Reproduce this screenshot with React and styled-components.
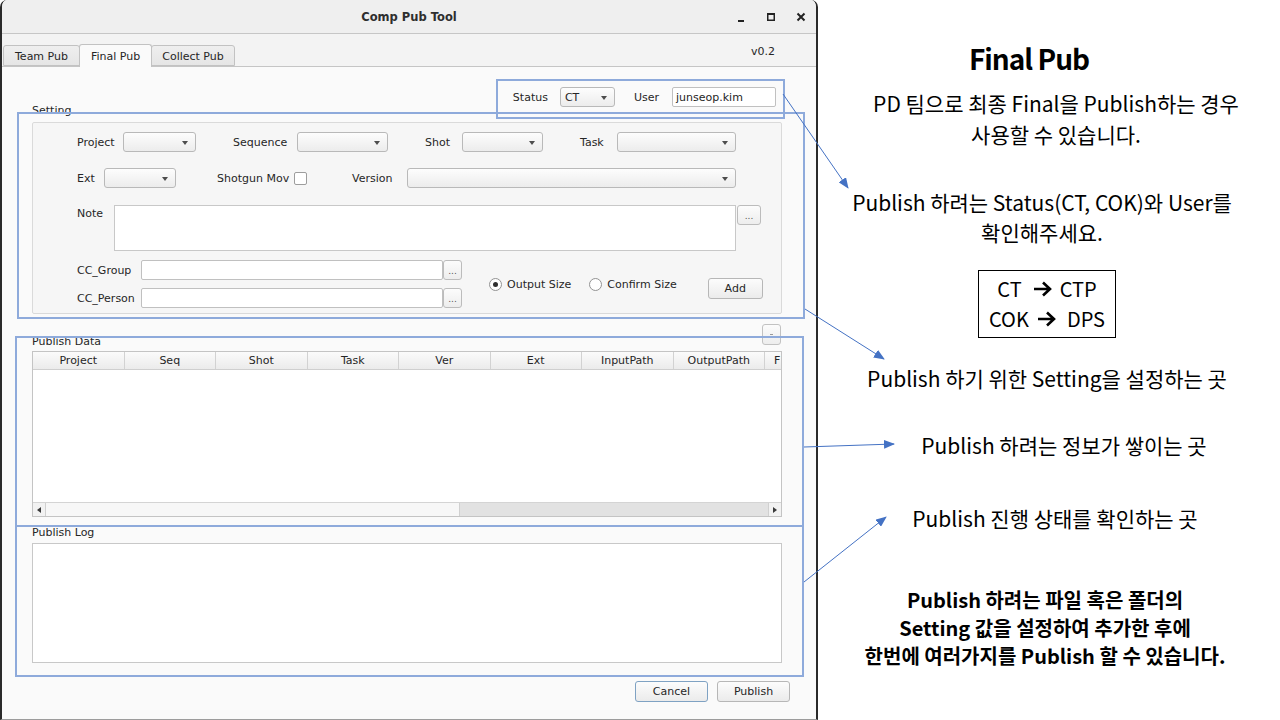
import React from "react";
import styled, { createGlobalStyle } from "styled-components";

const Global = createGlobalStyle`
  html, body { margin: 0; padding: 0; background: #fff; overflow: hidden; }
  #root { width: 1280px; height: 720px; }
  * { box-sizing: border-box; }
`;

const Page = styled.div`
  position: relative;
  width: 1280px;
  height: 720px;
  display: flex;
  background: #fff;
`;

/* ---------- Window ---------- */
const Window = styled.div`
  width: 818px;
  height: 720px;
  flex: none;
  display: flex;
  flex-direction: column;
  border-left: 2px solid #2a2a2a;
  border-right: 2px solid #2a2a2a;
  border-bottom: 1px solid #9c9c9c;
  border-radius: 7px 7px 0 0;
  background: #f3f3f3;
  overflow: hidden;
  font-family: "DejaVu Sans", "Noto Sans", sans-serif;
  font-size: 11px;
  color: #262626;
`;

const TitleBar = styled.div`
  height: 34px;
  flex: none;
  display: grid;
  grid-template-columns: 1fr auto 1fr;
  align-items: center;
  background: #efefef;
  border-bottom: 1px solid #c6c6c6;
`;

const TitleText = styled.div`
  grid-column: 2;
  font-weight: bold;
  font-size: 11.5px;
  color: #2e2e2e;
`;

const WinControls = styled.div`
  grid-column: 3;
  justify-self: end;
  display: flex;
  gap: 16px;
  padding-right: 8px;
`;

const WinButton = styled.span`
  width: 14px;
  height: 14px;
  display: flex;
  align-items: center;
  justify-content: center;
`;

const TabBar = styled.div`
  height: 32px;
  flex: none;
  display: flex;
  align-items: flex-end;
  padding-left: 1px;
  background: #f3f3f3;
  position: relative;
  z-index: 1;
`;

const Tab = styled.div`
  width: ${(p) => p.$w}px;
  height: ${(p) => (p.$active ? 23 : 21)}px;
  margin-left: ${(p) => (p.$first ? 0 : -1)}px;
  margin-bottom: ${(p) => (p.$active ? -1 : 0)}px;
  display: flex;
  align-items: center;
  justify-content: center;
  border: 1px solid #c2c2c2;
  border-bottom: ${(p) => (p.$active ? "none" : "1px solid #c2c2c2")};
  border-radius: 3px 3px 0 0;
  background: ${(p) => (p.$active ? "#fafafa" : "linear-gradient(#efefef, #e5e5e5)")};
  position: relative;
  z-index: ${(p) => (p.$active ? 2 : 1)};
  padding-top: ${(p) => (p.$active ? 0 : 1)}px;
`;

const VersionTag = styled.div`
  margin-left: auto;
  align-self: flex-end;
  margin-bottom: 8px;
  padding-right: 41px;
`;

const TabPane = styled.div`
  flex: 1;
  display: flex;
  flex-direction: column;
  background: #fafafa;
  border-top: 1px solid #c5c5c5;
  padding: 0 34px 0 30px;
`;

/* ---------- Generic widgets ---------- */
const StatusRow = styled.div`
  margin-top: 20px;
  height: 20px;
  display: flex;
  align-items: center;
  justify-content: flex-end;
  padding-right: 6px;
`;

const FieldLabel = styled.span`
  flex: none;
  white-space: nowrap;
  width: ${(p) => (p.$w ? `${p.$w}px` : "auto")};
  margin-left: ${(p) => p.$ml || 0}px;
  align-self: ${(p) => (p.$top ? "flex-start" : "auto")};
  margin-top: ${(p) => (p.$top ? 2 : 0)}px;
`;

const Combo = styled.div`
  width: ${(p) => p.$w}px;
  height: 20px;
  flex: none;
  margin-left: ${(p) => p.$ml || 0}px;
  border: 1px solid #b9b9b9;
  border-radius: 3px;
  background: linear-gradient(#fdfdfd, #ececec);
  position: relative;
  display: flex;
  align-items: center;
  padding-left: 4px;
  &::after {
    content: "";
    position: absolute;
    right: 7px;
    top: 8px;
    border-left: 3.5px solid transparent;
    border-right: 3.5px solid transparent;
    border-top: 4px solid #4d4d4d;
  }
`;

const LineEdit = styled.div`
  width: ${(p) => p.$w}px;
  height: 20px;
  flex: none;
  margin-left: ${(p) => p.$ml || 0}px;
  border: 1px solid #c0c0c0;
  border-radius: 2px;
  background: #fff;
  display: flex;
  align-items: center;
  padding-left: 3px;
  color: #1e1e1e;
`;

const TextBox = styled.div`
  width: ${(p) => p.$w}px;
  height: ${(p) => p.$h}px;
  flex: none;
  margin-top: ${(p) => p.$mt || 0}px;
  border: 1px solid #c8c8c8;
  background: #fff;
`;

const DotsButton = styled.div`
  width: ${(p) => p.$w}px;
  height: 20px;
  flex: none;
  margin-left: ${(p) => p.$ml || 0}px;
  align-self: flex-start;
  border: 1px solid #bcbcbc;
  border-radius: 3px;
  background: linear-gradient(#fcfcfc, #ededed);
  display: flex;
  align-items: flex-end;
  justify-content: center;
  padding-bottom: 3px;
  font-size: 9px;
  line-height: 9px;
  color: #555;
`;

const CheckBox = styled.span`
  width: 13px;
  height: 13px;
  flex: none;
  border: 1px solid #9d9d9d;
  border-radius: 2px;
  background: #fff;
`;

const RadioItem = styled.span`
  display: flex;
  align-items: center;
  gap: 5px;
  margin-left: ${(p) => p.$ml || 0}px;
  white-space: nowrap;
`;

const RadioCircle = styled.span`
  width: 13px;
  height: 13px;
  flex: none;
  border-radius: 50%;
  border: 1px solid #939393;
  background: #fff;
  display: flex;
  align-items: center;
  justify-content: center;
  &::after {
    content: "";
    width: 5px;
    height: 5px;
    border-radius: 50%;
    background: ${(p) => (p.$checked ? "#2f2f2f" : "transparent")};
  }
`;

const PushButton = styled.div`
  width: ${(p) => p.$w}px;
  height: 21px;
  flex: none;
  margin-left: ${(p) => p.$ml || 0}px;
  margin-top: ${(p) => p.$mt || 0}px;
  border: 1px solid ${(p) => (p.$focus ? "#7fa2c3" : "#b7b7b7")};
  border-radius: 3px;
  background: linear-gradient(#fcfcfc, #ebebeb);
  display: flex;
  align-items: center;
  justify-content: center;
  color: #262626;
`;

/* ---------- Setting group ---------- */
const GroupTitle = styled.div`
  line-height: 14px;
  height: 14px;
  margin-top: ${(p) => p.$mt || 0}px;
`;

const SettingFrame = styled.div`
  margin-top: 4px;
  border: 1px solid #dadada;
  border-radius: 2px;
  background: #f6f6f6;
  padding: 9px 0 5px 44px;
  display: flex;
  flex-direction: column;
`;

const FormRow = styled.div`
  display: flex;
  align-items: center;
  height: ${(p) => p.$h || 20}px;
  margin-top: ${(p) => p.$mt || 0}px;
`;

const CCBlock = styled.div`
  display: flex;
  align-items: center;
  margin-top: 9px;
`;

const CCColumn = styled.div`
  display: flex;
  flex-direction: column;
  gap: 8px;
`;

const CCRow = styled.div`
  display: flex;
  align-items: center;
  height: 20px;
`;

/* ---------- Data table ---------- */
const DataHeader = styled.div`
  margin-top: 10px;
  height: 25px;
  display: flex;
  justify-content: space-between;
`;

const DataTitle = styled.div`
  align-self: flex-end;
  line-height: 14px;
`;

const TinyButton = styled.div`
  width: 19px;
  height: 21px;
  margin-right: 1px;
  border: 1px solid #c2c2c2;
  border-radius: 3px;
  background: linear-gradient(#fcfcfc, #ededed);
  display: flex;
  justify-content: center;
  padding-top: 9px;
  &::after {
    content: "";
    width: 3px;
    height: 1px;
    background: #9a9a9a;
  }
`;

const Table = styled.div`
  margin-top: 2px;
  height: 166px;
  border: 1px solid #c4c4c4;
  background: #fff;
  display: flex;
  flex-direction: column;
  overflow: hidden;
`;

const HeaderRow = styled.div`
  display: flex;
  height: 18px;
  flex: none;
  border-bottom: 1px solid #cfcfcf;
  background: linear-gradient(#fbfbfb, #ebebeb);
  overflow: hidden;
`;

const HeaderCell = styled.div`
  flex: none;
  width: 91.5px;
  border-right: 1px solid #d2d2d2;
  display: flex;
  align-items: center;
  justify-content: ${(p) => (p.$clip ? "flex-start" : "center")};
  padding-left: ${(p) => (p.$clip ? 9 : 0)}px;
  white-space: nowrap;
`;

const TableBody = styled.div`
  flex: 1;
`;

const HScroll = styled.div`
  height: 14px;
  flex: none;
  display: flex;
  border-top: 1px solid #d4d4d4;
  background: #e2e2e2;
`;

const ScrollArrow = styled.div`
  width: 13px;
  flex: none;
  display: flex;
  align-items: center;
  justify-content: center;
  background: #f2f2f2;
  border-${(p) => (p.$right ? "left" : "right")}: 1px solid #d0d0d0;
  margin-left: ${(p) => (p.$right ? "auto" : 0)};
  &::after {
    content: "";
    border-top: 3px solid transparent;
    border-bottom: 3px solid transparent;
    ${(p) => (p.$right ? "border-left" : "border-right")}: 4px solid #3a3a3a;
  }
`;

const ScrollThumb = styled.div`
  width: 414px;
  flex: none;
  background: #f7f7f7;
  border-right: 1px solid #d0d0d0;
`;

const ButtonRow = styled.div`
  margin-top: 18px;
  margin-right: -8px;
  display: flex;
  justify-content: flex-end;
  gap: 9px;
`;

/* ---------- Notes (slide annotation) ---------- */
const Notes = styled.div`
  flex: 1;
  display: flex;
  flex-direction: column;
  align-items: center;
  font-family: "Noto Sans CJK KR", "Noto Sans", sans-serif;
  color: #000;
`;

const NoteTitle = styled.div`
  margin-top: 41px;
  font-size: 28px;
  line-height: 34px;
  font-weight: bold;
  letter-spacing: -1px;
  margin-right: 40px;
  white-space: nowrap;
`;

const NoteText = styled.div`
  margin-top: ${(p) => p.$mt}px;
  font-size: ${(p) => (p.$bold ? 20 : 21)}px;
  line-height: ${(p) => p.$lh || 30}px;
  font-weight: ${(p) => (p.$bold ? "bold" : "normal")};
  text-align: center;
  white-space: nowrap;
  margin-left: ${(p) => (p.$shift > 0 ? p.$shift * 2 : 0)}px;
  margin-right: ${(p) => (p.$shift < 0 ? -p.$shift * 2 : 0)}px;
`;

const MapBox = styled.div`
  margin-top: 23px;
  width: 138px;
  height: 68px;
  border: 1px solid #000;
  display: flex;
  flex-direction: column;
  align-items: center;
  justify-content: center;
  margin-right: 4px;
`;

const MapLine = styled.div`
  display: flex;
  align-items: center;
  height: 30px;
  font-size: 20px;
  line-height: 30px;
  white-space: nowrap;
`;

const MapArrow = styled.svg`
  flex: none;
  margin: 0 ${(p) => p.$r}px 0 ${(p) => p.$l}px;
`;

/* ---------- Overlays ---------- */
const Highlight = styled.div`
  position: absolute;
  left: ${(p) => p.$x}px;
  top: ${(p) => p.$y}px;
  width: ${(p) => p.$w}px;
  height: ${(p) => p.$h}px;
  border: 2px solid #8eaadb;
  pointer-events: none;
`;

const ArrowLayer = styled.svg`
  position: absolute;
  left: 0;
  top: 0;
  pointer-events: none;
`;

const arrows = [
  [783, 94, 848, 188],
  [805, 309, 884, 359],
  [804, 447, 894, 444],
  [804, 582, 886, 517],
];

const columns = ["Project", "Seq", "Shot", "Task", "Ver", "Ext", "InputPath", "OutputPath"];

const BoldArrow = ({ l, r }) => (
  <MapArrow $l={l} $r={r} width="19" height="16" viewBox="0 0 19 16">
    <path d="M1 8 H17 M10 1.5 L17 8 L10 14.5" fill="none" stroke="#000" strokeWidth="2.6" strokeLinejoin="miter" />
  </MapArrow>
);

export default function App() {
  return (
    <>
      <Global />
      <Page>
        <Window>
          <TitleBar>
            <TitleText>Comp Pub Tool</TitleText>
            <WinControls>
              <WinButton>
                <svg width="14" height="14" viewBox="0 0 14 14">
                  <rect x="4" y="10" width="6" height="2" fill="#222" />
                </svg>
              </WinButton>
              <WinButton>
                <svg width="14" height="14" viewBox="0 0 14 14">
                  <rect x="3.75" y="3.75" width="6.5" height="6.5" fill="none" stroke="#222" strokeWidth="1.5" />
                  <rect x="3" y="3" width="8" height="2" fill="#222" />
                </svg>
              </WinButton>
              <WinButton>
                <svg width="14" height="14" viewBox="0 0 14 14">
                  <path d="M3.5 3.5 L10.5 10.5 M10.5 3.5 L3.5 10.5" stroke="#222" strokeWidth="2" />
                </svg>
              </WinButton>
            </WinControls>
          </TitleBar>

          <TabBar>
            <Tab $w={77} $first>Team Pub</Tab>
            <Tab $w={73} $active>Final Pub</Tab>
            <Tab $w={84}>Collect Pub</Tab>
            <VersionTag>v0.2</VersionTag>
          </TabBar>

          <TabPane>
            <StatusRow>
              <FieldLabel>Status</FieldLabel>
              <Combo $w={55} $ml={12}>CT</Combo>
              <FieldLabel $ml={19}>User</FieldLabel>
              <LineEdit $w={104} $ml={13}>junseop.kim</LineEdit>
            </StatusRow>

            <GroupTitle $mt={-3}>Setting</GroupTitle>
            <SettingFrame>
              <FormRow>
                <FieldLabel $w={46}>Project</FieldLabel>
                <Combo $w={73} />
                <FieldLabel $ml={37} $w={64}>Sequence</FieldLabel>
                <Combo $w={91} />
                <FieldLabel $ml={37} $w={37}>Shot</FieldLabel>
                <Combo $w={81} />
                <FieldLabel $ml={37} $w={37}>Task</FieldLabel>
                <Combo $w={119} />
              </FormRow>
              <FormRow $mt={16}>
                <FieldLabel $w={27}>Ext</FieldLabel>
                <Combo $w={72} />
                <FieldLabel $ml={41} $w={77}>Shotgun Mov</FieldLabel>
                <CheckBox />
                <FieldLabel $ml={45} $w={55}>Version</FieldLabel>
                <Combo $w={329} />
              </FormRow>
              <FormRow $mt={17} $h={46}>
                <FieldLabel $w={37} $top>Note</FieldLabel>
                <TextBox $w={622} $h={46} />
                <DotsButton $w={24} $ml={1}>...</DotsButton>
              </FormRow>
              <CCBlock>
                <CCColumn>
                  <CCRow>
                    <FieldLabel $w={64}>CC_Group</FieldLabel>
                    <LineEdit $w={302} />
                    <DotsButton $w={19}>...</DotsButton>
                  </CCRow>
                  <CCRow>
                    <FieldLabel $w={64}>CC_Person</FieldLabel>
                    <LineEdit $w={302} />
                    <DotsButton $w={19}>...</DotsButton>
                  </CCRow>
                </CCColumn>
                <RadioItem $ml={27}>
                  <RadioCircle $checked />
                  Output Size
                </RadioItem>
                <RadioItem $ml={18}>
                  <RadioCircle />
                  Confirm Size
                </RadioItem>
                <PushButton $w={55} $ml={31} $mt={8}>Add</PushButton>
              </CCBlock>
            </SettingFrame>

            <DataHeader>
              <DataTitle>Publish Data</DataTitle>
              <TinyButton />
            </DataHeader>
            <Table>
              <HeaderRow>
                {columns.map((c) => (
                  <HeaderCell key={c}>{c}</HeaderCell>
                ))}
                <HeaderCell $clip>F</HeaderCell>
              </HeaderRow>
              <TableBody />
              <HScroll>
                <ScrollArrow />
                <ScrollThumb />
                <ScrollArrow $right />
              </HScroll>
            </Table>

            <GroupTitle $mt={9}>Publish Log</GroupTitle>
            <TextBox $mt={3} $w={750} $h={120} />

            <ButtonRow>
              <PushButton $w={73} $focus>Cancel</PushButton>
              <PushButton $w={73}>Publish</PushButton>
            </ButtonRow>
          </TabPane>
        </Window>

        <Notes>
          <NoteTitle>Final Pub</NoteTitle>
          <NoteText $mt={13} $lh={31} $shift={7}>
            PD 팀으로 최종 Final을 Publish하는 경우
            <br />
            사용할 수 있습니다.
          </NoteText>
          <NoteText $mt={37} $shift={-7}>
            Publish 하려는 Status(CT, COK)와 User를
            <br />
            확인해주세요.
          </NoteText>
          <MapBox>
            <MapLine>
              <span>CT</span>
              <BoldArrow l={11} r={8} />
              <span>CTP</span>
            </MapLine>
            <MapLine>
              <span>COK</span>
              <BoldArrow l={8} r={11} />
              <span>DPS</span>
            </MapLine>
          </MapBox>
          <NoteText $mt={25} $shift={-2}>Publish 하기 위한 Setting을 설정하는 곳</NoteText>
          <NoteText $mt={37} $shift={15}>Publish 하려는 정보가 쌓이는 곳</NoteText>
          <NoteText $mt={43} $shift={6}>Publish 진행 상태를 확인하는 곳</NoteText>
          <NoteText $mt={53} $lh={28} $bold $shift={-4}>
            Publish 하려는 파일 혹은 폴더의
            <br />
            Setting 값을 설정하여 추가한 후에
            <br />
            한번에 여러가지를 Publish 할 수 있습니다.
          </NoteText>
        </Notes>

        <Highlight $x={496} $y={79} $w={289} $h={40} />
        <Highlight $x={17} $y={112} $w={788} $h={207} />
        <Highlight $x={15} $y={336} $w={789} $h={191} />
        <Highlight $x={15} $y={525} $w={789} $h={152} />

        <ArrowLayer width="1280" height="720" viewBox="0 0 1280 720">
          <defs>
            <marker id="ah" markerWidth="11" markerHeight="9" refX="10" refY="4.5" orient="auto" markerUnits="userSpaceOnUse">
              <path d="M0,0 L11,4.5 L0,9 z" fill="#4472c4" />
            </marker>
          </defs>
          {arrows.map(([x1, y1, x2, y2], i) => (
            <line key={i} x1={x1} y1={y1} x2={x2} y2={y2} stroke="#4472c4" strokeWidth="1" markerEnd="url(#ah)" />
          ))}
        </ArrowLayer>
      </Page>
    </>
  );
}
